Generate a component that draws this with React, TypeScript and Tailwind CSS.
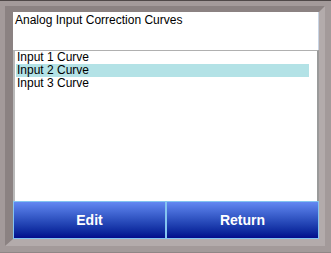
export default function App() {
  const rows = ['Input 1 Curve', 'Input 2 Curve', 'Input 3 Curve'];
  const selected = 1;

  return (
    <div className="w-[331px] h-[253px] bg-[#a39a9a] border-t border-[#4f4848] font-['Liberation_Sans',Arial,sans-serif]">
      <div className="h-[252px] pt-[5px] pl-[5px] pr-[6px] pb-[6px] border-b border-[#8f8686]">
        <div className="h-full border-t-[6px] border-l-[8px] border-r-[6px] border-b-[7px] border-t-[#8b8282] border-l-[#8b8282] border-r-[#b3abab] border-b-[#b3abab] flex flex-col">
          <div className="h-[38px] bg-white border-r border-[#c7d3e3] px-[2px] pt-[1px] text-[12px] leading-[14px] text-black">
            Analog Input Correction Curves
          </div>
          <div className="flex-1 bg-white border-t border-l-2 border-r-2 border-t-[#b0b0b0] border-l-[#b9b9b9] border-r-[#9a9a9a] pl-[1px] pr-[8px]">
            {rows.map((r, i) => (
              <div
                key={r}
                className={`h-[13px] leading-[13px] text-[12px] pl-[1px] text-black ${i === selected ? 'bg-[#b3e2e6]' : ''}`}
              >
                {r}
              </div>
            ))}
          </div>
          <div className="h-[38px] flex border border-[#84c4f0] bg-[#84c4f0] gap-[2px]">
            {['Edit', 'Return'].map((b) => (
              <button
                key={b}
                className="flex-1 bg-gradient-to-b from-[#6388f2] to-[#050a8c] text-white font-bold text-[14px] flex items-center justify-center"
              >
                {b}
              </button>
            ))}
          </div>
        </div>
      </div>
    </div>
  );
}
